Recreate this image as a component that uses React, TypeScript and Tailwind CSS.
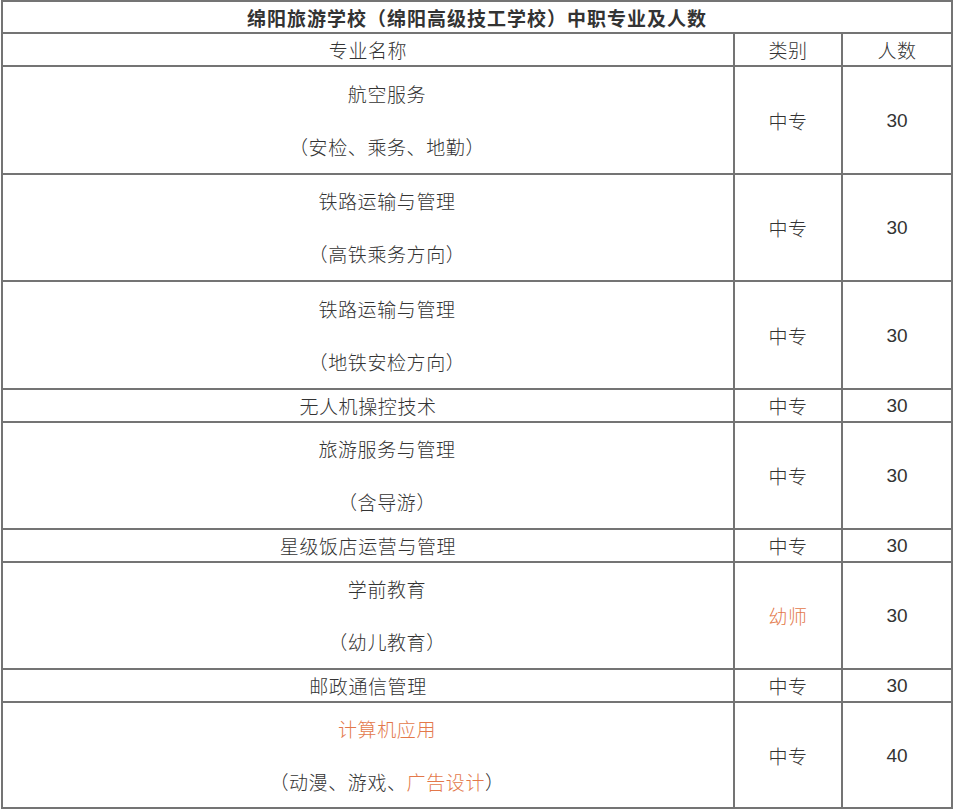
const rows: { name: string; sub?: React.ReactNode; nameOrange?: boolean; kind: string; kindOrange?: boolean; count: string; h: string }[] = [
  { name: '航空服务', sub: '（安检、乘务、地勤）', kind: '中专', count: '30', h: 'h-[108px]' },
  { name: '铁路运输与管理', sub: '（高铁乘务方向）', kind: '中专', count: '30', h: 'h-[107px]' },
  { name: '铁路运输与管理', sub: '（地铁安检方向）', kind: '中专', count: '30', h: 'h-[108px]' },
  { name: '无人机操控技术', kind: '中专', count: '30', h: 'h-[33px]' },
  { name: '旅游服务与管理', sub: '（含导游）', kind: '中专', count: '30', h: 'h-[107px]' },
  { name: '星级饭店运营与管理', kind: '中专', count: '30', h: 'h-[33px]' },
  { name: '学前教育', sub: '（幼儿教育）', kind: '幼师', kindOrange: true, count: '30', h: 'h-[107px]' },
  { name: '邮政通信管理', kind: '中专', count: '30', h: 'h-[33px]' },
  {
    name: '计算机应用',
    nameOrange: true,
    sub: (
      <>
        （动漫、游戏、<span className="text-[#e3784a]">广告设计</span>）
      </>
    ),
    kind: '中专',
    count: '40',
    h: 'h-[106px]',
  },
];

const cell = 'border-2 border-[#747474] text-center align-middle p-0';

export default function App() {
  return (
    <div className="pl-px pt-0 bg-white min-h-[811px] text-[#333] text-[19px] font-['Noto_Sans_CJK_SC',sans-serif]">
      <table className="border-collapse w-[950px] table-fixed">
        <colgroup>
          <col className="w-[732px]" />
          <col className="w-[108px]" />
          <col className="w-[110px]" />
        </colgroup>
        <tbody>
          <tr className="h-[32px]">
            <td colSpan={3} className={`${cell} font-bold leading-none tracking-[1px]`}>
              绵阳旅游学校（绵阳高级技工学校）中职专业及人数
            </td>
          </tr>
          <tr className="h-[33px]">
            <td className={`${cell} leading-none font-light tracking-[0.6px]`}>专业名称</td>
            <td className={`${cell} leading-none font-light tracking-[0.6px]`}>类别</td>
            <td className={`${cell} leading-none font-light tracking-[0.6px]`}>人数</td>
          </tr>
          {rows.map((r, i) => (
            <tr key={i} className={r.h}>
              <td className={`${cell} font-light tracking-[0.6px]`}>
                {r.sub ? (
                  <div className="flex flex-col items-center gap-[25px] leading-[28px]">
                    <p className={`indent-[2em] ${r.nameOrange ? 'text-[#e3784a]' : ''}`}>{r.name}</p>
                    <p className="indent-[2em]">{r.sub}</p>
                  </div>
                ) : (
                  <p className="leading-none">{r.name}</p>
                )}
              </td>
              <td className={`${cell} font-light leading-none tracking-[0.6px] ${r.kindOrange ? 'text-[#e3784a]' : ''}`}>{r.kind}</td>
              <td className={`${cell} leading-none font-['Liberation_Sans_Narrow','Liberation_Sans',sans-serif]`}>{r.count}</td>
            </tr>
          ))}
        </tbody>
      </table>
    </div>
  );
}
